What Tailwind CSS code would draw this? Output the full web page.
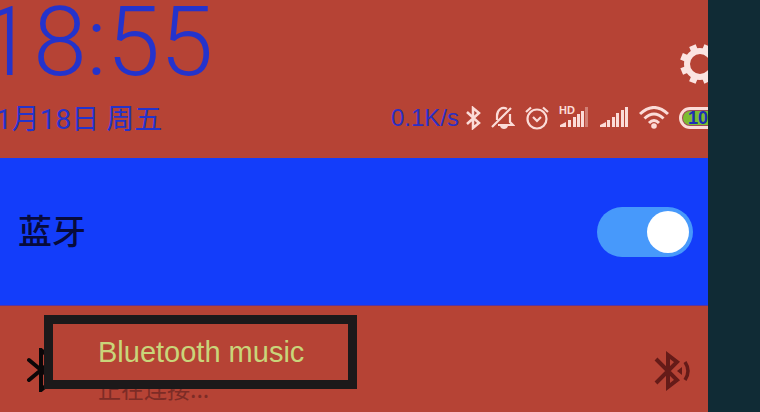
<!DOCTYPE html>
<html lang="zh-CN">
<head>
<meta charset="utf-8">
<meta name="viewport" content="width=device-width, initial-scale=1">
<title>蓝牙</title>
<script src="https://cdn.jsdelivr.net/npm/@tailwindcss/browser@4"></script>
</head>
<body class="flex min-h-screen overflow-hidden bg-[#102b35] font-['Noto_Sans_CJK_SC',sans-serif]">
<main class="flex min-h-screen min-w-0 flex-1 flex-col overflow-hidden bg-[#b64335]">
  <header class="flex h-[158px] flex-col text-[#2433cc]">
    <div class="flex h-[96px] items-start justify-between">
      <time class="-ml-5 font-[Roboto,sans-serif] text-[96px] leading-[84px] font-light">18:55</time>
      <button type="button" aria-label="设置" class="mt-11 w-7 overflow-hidden text-[#fbe4e1]">
        <svg class="h-10 w-10 max-w-none" viewBox="-20 -20 40 40" fill="none" stroke="currentColor">
          <circle r="13" stroke-width="6"/>
          <g stroke-width="7" transform="rotate(22.5)">
            <path d="M0-20V-13M0 20V13M-20 0H-13M20 0H13"/>
            <path d="M-14-14L-9-9M14-14L9-9M-14 14L-9 9M14 14L9 9"/>
          </g>
        </svg>
      </button>
    </div>
    <div class="flex h-11 items-center justify-between">
      <p class="-ml-1 pt-1 font-[Roboto,'Noto_Sans_CJK_SC',sans-serif] text-[28px] leading-10 whitespace-nowrap">1月18日 周五</p>
      <div class="flex items-center gap-[10px] text-[#fbdcd8]">
        <span class="-mr-1 font-['Liberation_Sans',sans-serif] text-2xl text-[#2b2fc4]">0.1K/s</span>
        <svg class="h-6 w-4" viewBox="0 0 16 24" fill="none" stroke="currentColor" stroke-width="2.500"><path d="M2 6L14 17L8 22V2L14 7L2 18"/></svg>
        <svg class="h-6 w-6" viewBox="0 0 24 24" fill="none" stroke="currentColor" stroke-width="2.200"><path d="M1 21L20 2M7 19H22L19 16V8M16 3C11 0 6 4 6 10V14"/><path d="M9 20H17Q16 23 13 23T9 20Z" fill="currentColor" stroke="none"/></svg>
        <svg class="h-6 w-6" viewBox="0 0 24 24" fill="none" stroke="currentColor" stroke-width="2.200"><circle cx="12" cy="13" r="9.500"/><path d="M1 6L6 1.500M23 6L18 1.500M8 11L12 15L16 11"/></svg>
        <svg class="h-6 w-[30px] overflow-visible" viewBox="0 0 30 24" fill="currentColor"><text x="0" y="8" font-size="11" font-weight="700" font-family="Liberation Sans, sans-serif">HD</text><path d="M1 21V19L7 16V21ZM9 14H12V21H9ZM14 11H17V21H14ZM18 8H21V21H18ZM22 5H25V21H22Z"/><path d="M26 1H29V21H26Z" opacity=".4"/></svg>
        <svg class="h-6 w-[30px]" viewBox="0 0 30 24" fill="currentColor"><path d="M1 21V19L7 16V21ZM8 14H11V21H8ZM13 11H16V21H13ZM17 7H20V21H17ZM22 4H25V21H22ZM26 1H29V21H26Z"/></svg>
        <svg class="h-6 w-[30px]" viewBox="0 0 30 24" fill="none" stroke="currentColor" stroke-width="3"><path d="M1 8Q15-5 29 8M5.500 12.500Q15 3.500 24.500 12.500M10 17Q15 12 20 17"/><circle cx="15" cy="20" r="2.800" fill="currentColor" stroke="none"/></svg>
        <div class="w-[29px] overflow-hidden">
          <div class="flex h-[22px] w-12 items-center rounded-full border-3 border-[#fbdcd8] bg-[#a04a55] p-px">
            <span class="flex h-full w-full items-center justify-center rounded-full bg-[#7cbd32] font-['Liberation_Sans',sans-serif] text-lg leading-4 font-bold text-[#1c2fb5]">100</span>
          </div>
        </div>
      </div>
    </div>
  </header>

  <section class="flex h-[147px] items-center justify-between bg-[#133dfa] pr-[15px] pl-[18px]">
    <label for="bluetooth" class="pb-1 text-[34px] leading-10 font-medium text-[#070b3c]">蓝牙</label>
    <span class="relative flex h-[50px] w-24 items-center">
      <input id="bluetooth" type="checkbox" role="switch" checked class="h-[50px] w-24 appearance-none rounded-full bg-[#4799fb]">
      <span class="pointer-events-none absolute right-1 h-[42px] w-[42px] rounded-full bg-white"></span>
    </span>
  </section>

  <section class="relative flex h-[107px] items-end justify-between overflow-hidden border-t border-[#5a34a0] pr-[18px] pl-[26px]">
    <svg class="mb-5 h-[44px] w-8 text-[#0c0708]" viewBox="0 0 32 44" fill="none" stroke="currentColor" stroke-width="4" stroke-linecap="round"><path d="M3 12L27 32L15 42V2L27 12L3 32"/></svg>
    <p class="mb-2 ml-10 flex-1 text-[23px] leading-8 text-[#7d2c26]">正在连接...</p>
    <svg class="mb-5 h-[42px] w-9 text-[#651b18]" viewBox="0 0 36 42" fill="none" stroke="currentColor" stroke-width="4"><path d="M2 9L23 30L14 37V5L23 12L2 33"/><path d="M23 21L28 17V25Z" fill="currentColor" stroke="none"/><path d="M31 12Q37 21 31 30" stroke-width="3.500"/></svg>
    <div class="absolute top-[9px] left-11 flex h-[74px] w-[313px] items-center border-[9px] border-[#1c191a] bg-[#b64335] pl-[45px]">
      <span class="font-['Liberation_Sans',sans-serif] text-[29px] leading-9 whitespace-nowrap text-[#c9d57a]">Bluetooth music</span>
    </div>
  </section>
</main>
<aside class="w-[52px] shrink-0 bg-[#102b35]"></aside>
</body>
</html>
